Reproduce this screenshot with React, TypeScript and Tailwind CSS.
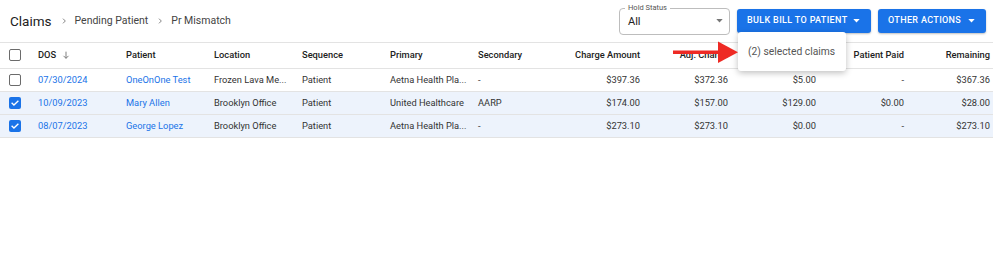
import { type ReactNode } from 'react'

/* ── data ─────────────────────────────────────── */
type Row = {
  sel: boolean
  dos: string
  patient: string
  location: string
  sequence: string
  primary: string
  secondary: string
  charge: string
  adj: string
  insPaid: string
  patPaid: string
  remaining: string
}

const rows: Row[] = [
  { sel: false, dos: '07/30/2024', patient: 'OneOnOne Test', location: 'Frozen Lava Me...', sequence: 'Patient', primary: 'Aetna Health Pla...', secondary: '-', charge: '$397.36', adj: '$372.36', insPaid: '$5.00', patPaid: '-', remaining: '$367.36' },
  { sel: true, dos: '10/09/2023', patient: 'Mary Allen', location: 'Brooklyn Office', sequence: 'Patient', primary: 'United Healthcare', secondary: 'AARP', charge: '$174.00', adj: '$157.00', insPaid: '$129.00', patPaid: '$0.00', remaining: '$28.00' },
  { sel: true, dos: '08/07/2023', patient: 'George Lopez', location: 'Brooklyn Office', sequence: 'Patient', primary: 'Aetna Health Pla...', secondary: '-', charge: '$273.10', adj: '$273.10', insPaid: '$0.00', patPaid: '-', remaining: '$273.10' },
]

/* ── bits ─────────────────────────────────────── */
function Checkbox({ checked }: { checked: boolean }) {
  if (checked)
    return (
      <span className="inline-flex w-[12px] h-[12px] rounded-[2px] bg-[#1a73e8] items-center justify-center">
        <svg width="10" height="10" viewBox="0 0 24 24" fill="none" stroke="#fff" strokeWidth="3.2" strokeLinecap="square">
          <path d="M5 12.5l4.5 4.5L19 7.5" />
        </svg>
      </span>
    )
  return <span className="inline-block w-[12px] h-[12px] rounded-[2px] border-[1.5px] border-[#6b6b6b] bg-white" />
}

function Caret({ color = '#fff' }: { color?: string }) {
  return (
    <svg width="7" height="4" viewBox="0 0 8 5">
      <path d="M0 0h8L4 4.5z" fill={color} />
    </svg>
  )
}

function Chevron() {
  return (
    <svg width="8" height="8" viewBox="0 0 24 24" fill="none" stroke="#666" strokeWidth="2.4" className="mx-[7px]">
      <path d="M9 5l7 7-7 7" />
    </svg>
  )
}

function Th({ children, right, w, pr = 'pr-[6px]' }: { children?: ReactNode; right?: boolean; w: string; pr?: string }) {
  return (
    <th className={`${w} ${right ? `text-right ${pr}` : 'text-left pl-2'} font-medium text-[9.3px] text-[#222] h-[25px] whitespace-nowrap`}>
      {children}
    </th>
  )
}

function Td({ children, right, link, pr = 'pr-[6px]' }: { children?: ReactNode; right?: boolean; link?: boolean; pr?: string }) {
  return (
    <td className={`${right ? `text-right ${pr}` : 'text-left pl-2'} text-[9.3px] h-[23px] whitespace-nowrap ${link ? 'text-[#1a73e8]' : 'text-[#333]'}`}>
      {children}
    </td>
  )
}

/* ── page ─────────────────────────────────────── */
export default function App() {
  return (
    <div className="relative w-[993px] h-[256px] bg-white overflow-hidden" style={{ fontFamily: 'Roboto, "Liberation Sans", sans-serif' }}>
      {/* toolbar */}
      <div className="flex items-center h-[43px] border-b border-[#e3e3e3] pl-[10px] pr-[7px]">
        <span className="text-[13.5px] text-[#222]">Claims</span>
        <span className="ml-[1px] flex items-center"><Chevron /></span>
        <span className="text-[10.5px] text-[#444]">Pending Patient</span>
        <span className="ml-[1px] flex items-center"><Chevron /></span>
        <span className="text-[10.5px] text-[#444]">Pr Mismatch</span>

        <div className="ml-auto flex items-center gap-[7px]">
          <div className="relative w-[111px] h-[27px] border border-[#bdbdbd] rounded-[4px] flex items-center pl-[8px] pr-[6px]">
            <span className="absolute -top-[6px] left-[5px] px-[3px] bg-white text-[7.5px] leading-[10px] text-[#555]">Hold Status</span>
            <span className="text-[11px] text-[#222] mt-[2px]">All</span>
            <span className="ml-auto"><Caret color="#777" /></span>
          </div>
          <button className="h-[24px] w-[134px] rounded-[3px] bg-[#1a73e8] text-white text-[9px] font-medium tracking-[0.35px] whitespace-nowrap flex items-center justify-between pl-[10px] pr-[11px] shadow-[0_1px_2px_rgba(0,0,0,0.25)]">
            BULK BILL TO PATIENT
            <Caret />
          </button>
          <button className="h-[24px] w-[108px] rounded-[3px] bg-[#1a73e8] text-white text-[9px] font-medium tracking-[0.35px] whitespace-nowrap flex items-center justify-between pl-[10px] pr-[11px] shadow-[0_1px_2px_rgba(0,0,0,0.25)]">
            OTHER ACTIONS
            <Caret />
          </button>
        </div>
      </div>

      {/* table */}
      <table className="table-fixed border-collapse w-[993px]">
        <thead>
          <tr className="border-b border-[#e3e3e3]">
            <th className="w-[30px] text-left pl-[9px]"><span className="flex"><Checkbox checked={false} /></span></th>
            <Th w="w-[88px]">
              <span className="inline-flex items-center gap-[5px]">
                DOS
                <svg width="10" height="10" viewBox="0 0 24 24" fill="none" stroke="#666" strokeWidth="2">
                  <path d="M12 4v16M6 14l6 6 6-6" />
                </svg>
              </span>
            </Th>
            <Th w="w-[88px]">Patient</Th>
            <Th w="w-[88px]">Location</Th>
            <Th w="w-[88px]">Sequence</Th>
            <Th w="w-[88px]">Primary</Th>
            <Th w="w-[88px]">Secondary</Th>
            <Th w="w-[88px]" right>Charge Amount</Th>
            <Th w="w-[88px]" right>Adj. Charge</Th>
            <Th w="w-[88px]" right>Insurance Paid</Th>
            <Th w="w-[88px]" right>Patient Paid</Th>
            <Th w="w-[83px]" right pr="pr-[3px]">Remaining</Th>
          </tr>
        </thead>
        <tbody>
          {rows.map((r) => (
            <tr key={r.dos} className={`border-b border-[#e3e3e3] ${r.sel ? 'bg-[#edf3fc]' : 'bg-white'}`}>
              <td className="pl-[9px]"><span className="flex"><Checkbox checked={r.sel} /></span></td>
              <Td link>{r.dos}</Td>
              <Td link>{r.patient}</Td>
              <Td>{r.location}</Td>
              <Td>{r.sequence}</Td>
              <Td>{r.primary}</Td>
              <Td>{r.secondary}</Td>
              <Td right>{r.charge}</Td>
              <Td right>{r.adj}</Td>
              <Td right>{r.insPaid}</Td>
              <Td right>{r.patPaid}</Td>
              <Td right pr="pr-[3px]">{r.remaining}</Td>
            </tr>
          ))}
        </tbody>
      </table>

      {/* dropdown menu */}
      <div className="absolute left-[738px] top-[32px] w-[108px] h-[39px] bg-white rounded-[3px] shadow-[0_2px_6px_rgba(0,0,0,0.25)] flex items-center pl-[10px]">
        <span className="text-[10.3px] text-[#555] whitespace-nowrap">(2) selected claims</span>
      </div>

      {/* annotation arrow */}
      <svg className="absolute left-[673px] top-[41px]" width="66" height="23" viewBox="0 0 66 23">
        <rect x="0" y="9.5" width="47" height="3.5" fill="#ee2a24" />
        <path d="M45 0.5L65 11.2L45 22z" fill="#ee2a24" />
      </svg>
    </div>
  )
}
